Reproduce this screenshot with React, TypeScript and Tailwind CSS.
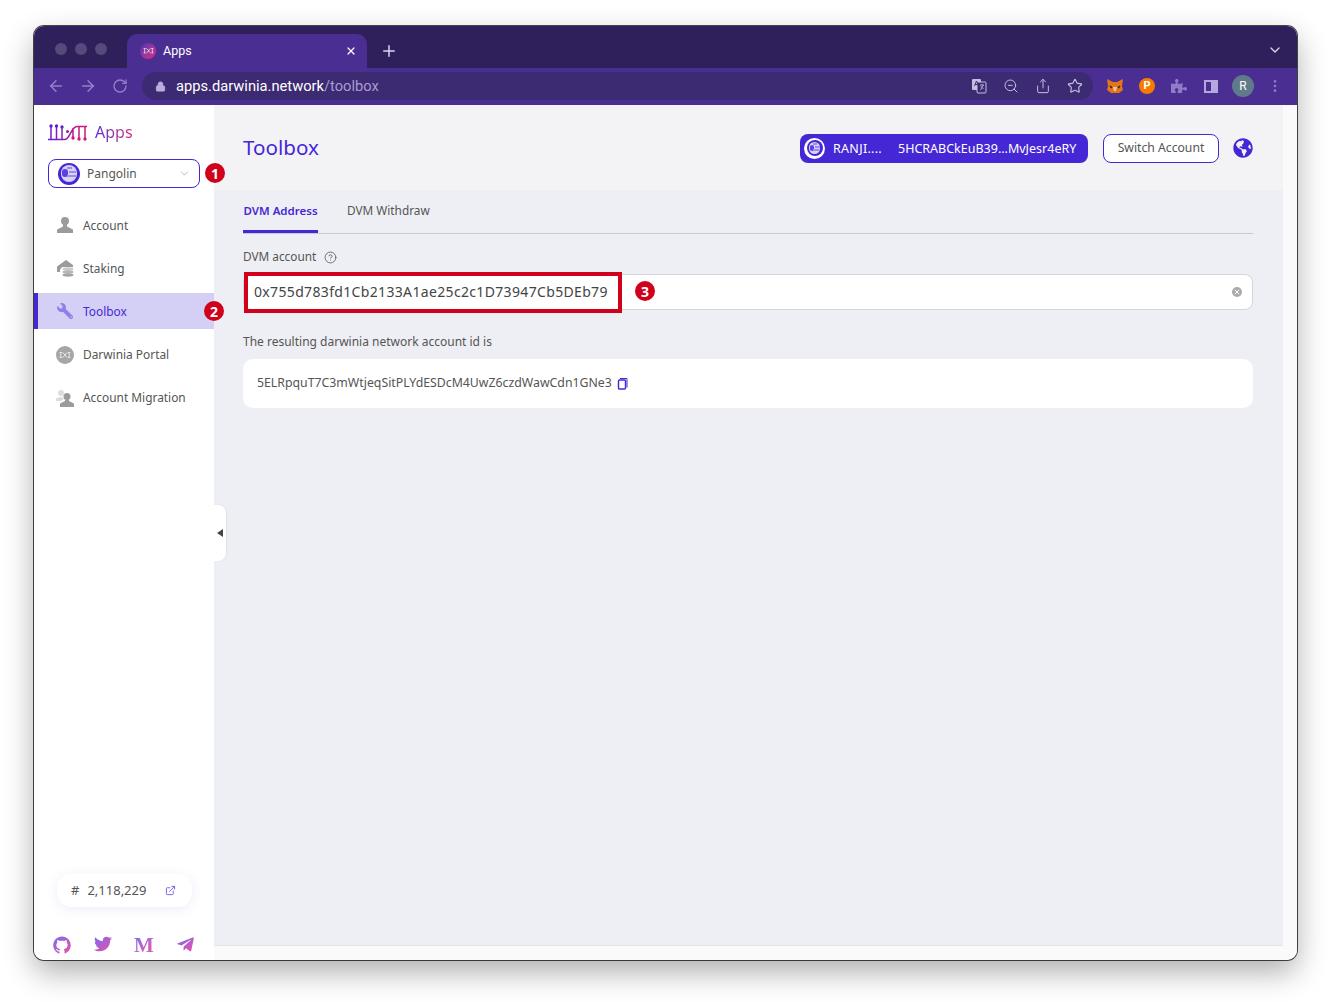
import { ArrowLeft, ArrowRight, ChevronDown, CircleHelp, ExternalLink, Plus, RotateCw, Share, Star, X, Lock, EllipsisVertical, ZoomOut } from "lucide-react"
import { FaPuzzlePiece, FaWrench, FaTwitter, FaTelegramPlane, FaGlobeAmericas } from "react-icons/fa"
import { AiOutlineGithub } from "react-icons/ai"

const sans = "font-['Noto_Sans',sans-serif]"
const chrome = "font-['Roboto',sans-serif]"

const Badge = ({ n, className }: { n: number; className: string }) => (
  <span className={`absolute z-10 flex size-5 items-center justify-center rounded-full bg-[#d0021b] text-[14px] font-bold text-white ${className}`}>
    {n}
  </span>
)

const DnaMark = ({ className }: { className?: string }) => (
  <svg viewBox="0 0 20 10" fill="none" stroke="currentColor" strokeWidth="1.2" className={className}>
    <path d="M1 1h4M1 9h4M3 1v8M15 1h4M15 9h4M17 1v8M6 1c3 0 5 8 8 8M6 9c3 0 5-8 8-8" />
  </svg>
)

const PlanetLogo = ({ className }: { className?: string }) => (
  <span className={`flex items-center justify-center rounded-full bg-[#4527d6] ${className}`}>
    <span className="relative block size-[74%] overflow-hidden rounded-full bg-[#d9d2f8]">
      <span className="absolute left-[10%] top-[22%] h-[50%] w-[32%] rounded-full bg-[#5a40dc]" />
      <span className="absolute right-[4%] top-[36%] h-[12%] w-[44%] bg-[#9c8dea]" />
      <span className="absolute right-[10%] top-[60%] h-[12%] w-[50%] bg-[#9c8dea]" />
      <span className="absolute left-[40%] top-[10%] h-[12%] w-[30%] bg-[#9c8dea]" />
    </span>
  </span>
)

const UserIcon = () => (
  <svg viewBox="0 0 18 18" className="size-[18px]" fill="#9b9b9b">
    <circle cx="9" cy="5" r="4" />
    <path d="M7 8h4v2.5l6 3V17H1v-3.500l6-3z" />
  </svg>
)

const StakingIcon = () => (
  <svg viewBox="0 0 18 18" className="size-[18px]" fill="#9b9b9b">
    <path d="M10 1l7 5v2H8C5 8 4 10 4 13H1V7.500z" />
    <ellipse cx="12" cy="10" rx="5.500" ry="1.700" fill="#c9c9c9" />
    <ellipse cx="12" cy="13" rx="5.500" ry="1.700" fill="#b5b5b5" />
    <ellipse cx="12" cy="16" rx="5.500" ry="1.700" fill="#a5a5a5" />
  </svg>
)

const MigrationIcon = () => (
  <svg viewBox="0 0 20 18" className="h-[18px] w-5" fill="#9b9b9b">
    <circle cx="6" cy="4" r="3" fill="#dcdcdc" />
    <path d="M1 12V9.500L5 8h2l2 2-3 2z" fill="#dcdcdc" />
    <circle cx="12" cy="7.500" r="3.500" />
    <path d="M10 10.500h4v1.500l5 2.500V18H5v-3.500l5-2.500z" />
  </svg>
)

const CopyIcon = () => (
  <svg viewBox="0 0 11 13" fill="none" stroke="#4527d6" className="ml-[5px] h-[13px] w-[11px]">
    <path d="M3 1.500h7v9" strokeWidth="1" />
    <rect x="1.500" y="3" width="7" height="9" rx="1" strokeWidth="1.400" />
  </svg>
)

const navItems = [
  { label: "Account", icon: <UserIcon /> },
  { label: "Staking", icon: <StakingIcon /> },
  { label: "Toolbox", icon: <FaWrench className="size-[16px] -scale-x-100 text-[#8f7fe8]" />, active: true },
  {
    label: "Darwinia Portal",
    icon: (
      <span className="flex size-[18px] items-center justify-center rounded-full bg-[#a6a6a6]">
        <DnaMark className="w-3 text-white" />
      </span>
    ),
  },
  { label: "Account Migration", icon: <MigrationIcon /> },
]

const Gradient = () => (
  <svg className="absolute size-0">
    <defs>
      <linearGradient id="social" x1="0" y1="0" x2="1" y2="1">
        <stop offset="0%" stopColor="#7a6cf0" />
        <stop offset="100%" stopColor="#ec4fa8" />
      </linearGradient>
      <linearGradient id="logo" x1="0" y1="0" x2="1" y2="0">
        <stop offset="0%" stopColor="#6a1fd6" />
        <stop offset="100%" stopColor="#d6186f" />
      </linearGradient>
    </defs>
  </svg>
)

const Sidebar = () => (
  <aside className="relative flex w-[180px] shrink-0 flex-col bg-white">
    <div className="flex items-center gap-[7px] pl-[14px] pt-[17px]">
      <svg viewBox="0 0 40 17" className="h-[17px] w-10" fill="none" stroke="url(#logo)" strokeWidth="1.500">
        <path d="M0 15.500h17c5 0 6-13 12-13h10M3 2v13M8.500 2v13M14 2v13M25 4v10M31 3v11M37 3v11" />
        <circle cx="3" cy="2" r="1.700" fill="#5a22d6" stroke="none" />
        <circle cx="8.500" cy="2" r="1.700" fill="#5a22d6" stroke="none" />
        <circle cx="14" cy="3" r="1.700" fill="#6a20d0" stroke="none" />
        <circle cx="19.500" cy="7.500" r="1.500" fill="#9a1fb0" stroke="none" />
        <circle cx="25" cy="14" r="1.700" fill="#d6186f" stroke="none" />
        <circle cx="31" cy="15" r="1.700" fill="#d6186f" stroke="none" />
        <circle cx="37" cy="15" r="1.700" fill="#d6186f" stroke="none" />
      </svg>
      <span className="bg-gradient-to-r from-[#5a1fd6] to-[#d6186f] bg-clip-text text-[16px] leading-[20px] text-transparent">Apps</span>
    </div>
    <div className="mx-[14px] mt-[17px] flex h-[29px] w-[152px] items-center rounded-[8px] border border-[#4527d6] pl-[9px] pr-[8px]">
      <PlanetLogo className="size-[22px]" />
      <span className="ml-[7px] pt-[1px] text-[12px] text-[#555]">Pangolin</span>
      <ChevronDown className="ml-auto size-[13px] text-[#aaa]" strokeWidth={1.5} />
    </div>
    <nav className="mt-[19px] flex flex-col gap-[7.200px]">
      {navItems.map((item) => (
        <div
          key={item.label}
          className={`flex h-9 items-center border-l-4 pl-[17px] ${item.active ? "border-[#4527d6] bg-[#d4d0f5] text-[#4527d6]" : "border-transparent text-[#555]"}`}
        >
          <span className="flex w-5 justify-center">{item.icon}</span>
          <span className="ml-[8px] pt-[1px] text-[11.900px]">{item.label}</span>
        </div>
      ))}
    </nav>
    <div className="mt-auto">
      <div className="mx-[23px] flex h-[33px] w-[135px] items-center rounded-[14px] bg-white pl-[14px] pr-[16px] text-[13px] text-[#555] shadow-[0_2px_12px_rgba(90,70,220,0.1)]">
        <span>#</span>
        <span className="ml-[8px]">2,118,229</span>
        <ExternalLink className="ml-auto size-[11px] text-[#6d5be6]" />
      </div>
      <div className="mt-[28px] flex h-[25px] items-start justify-between pl-[18px] pr-[19px]">
        <AiOutlineGithub className="size-[20px]" fill="url(#social)" />
        <FaTwitter className="size-[18px]" fill="url(#social)" />
        <span className="bg-gradient-to-br from-[#7a6cf0] to-[#ec4fa8] bg-clip-text font-['Liberation_Serif',serif] text-[21px] font-bold leading-[20px] text-transparent">M</span>
        <FaTelegramPlane className="size-[19px]" fill="url(#social)" />
      </div>
    </div>
    <div className="absolute left-full top-[400px] flex h-14 w-3 items-center justify-center rounded-r-[8px] bg-white shadow-[1px_0_2px_rgba(0,0,0,0.06)]">
      <span className="border-y-[4px] border-r-[6px] border-y-transparent border-r-[#444]" />
    </div>
  </aside>
)

const Main = () => (
  <main className="flex min-w-0 flex-1 flex-col bg-[#fafafa] pb-[14px] pr-[14px]">
    <div className="flex flex-1 flex-col border-b border-[#e4e5ea] bg-[#eeeff4]">
      <header className="flex h-[85px] shrink-0 items-center justify-between bg-[#f3f3f6] pl-[29px] pr-[30px]">
        <h1 className="text-[20.600px] text-[#4527d6]">Toolbox</h1>
        <div className="mt-[1px] flex items-center">
          <div className="flex h-[29px] w-[288px] items-center overflow-hidden rounded-[8px] bg-[#4527d6] pl-[4px] text-[12.500px] text-white">
            <span className="flex size-[21px] items-center justify-center rounded-full bg-white">
              <PlanetLogo className="size-[16px]" />
            </span>
            <span className="ml-[8px] w-[65px] pt-[2px] tracking-[0.3px]">RANJI....</span>
            <span className="whitespace-nowrap pt-[2px]">5HCRABCkEuB39...MvJesr4eRY</span>
          </div>
          <button className="ml-[15px] h-[29px] w-[116px] rounded-[8px] border border-[#4527d6] bg-white text-[12.200px] text-[#555]">Switch Account</button>
          <FaGlobeAmericas className="ml-[14px] size-5 text-[#4527d6]" />
        </div>
      </header>
      <section className="pl-[29px] pr-[30px] text-[11.800px] text-[#555]">
        <div className="flex h-[44px] items-end border-b border-[#c9c9d6]">
          <div className="flex h-[44px] w-[75px] items-center justify-center whitespace-nowrap border-b-[3px] border-[#4527d6] pt-[3px] text-[11.500px] font-semibold text-[#4527d6]">DVM Address</div>
          <div className="ml-[29px] flex h-[44px] items-center pb-[3px] pt-[3px]">DVM Withdraw</div>
        </div>
        <div className="mt-[14px] flex h-[18px] items-center">
          DVM account
          <CircleHelp className="ml-[8px] size-[13px]" strokeWidth={1.500} />
        </div>
        <div className="relative mt-[8px] flex h-9 items-center rounded-[8px] border border-[#d5d5d9] bg-white pl-[10px] pr-[10px]">
          <span className="pb-[1px] text-[14px] tracking-[0.340px] text-[#444]">0x755d783fd1Cb2133A1ae25c2c1D73947Cb5DEb79</span>
          <span className="absolute left-0 top-[-3px] h-[41px] w-[378px] border-[4px] border-[#d0021b]" />
          <Badge n={3} className="left-[391px] top-[6px]" />
          <span className="ml-auto flex size-[10px] items-center justify-center rounded-full bg-[#aaa]">
            <X className="size-2 text-white" strokeWidth={3} />
          </span>
        </div>
        <div className="mt-[23px] text-[12px] leading-[18px]">The resulting darwinia network account id is</div>
        <div className="mt-[8px] flex h-[49px] items-center rounded-[10px] bg-white pl-[14px]">
          <span className="text-[12.300px]">5ELRpquT7C3mWtjeqSitPLYdESDcM4UwZ6czdWawCdn1GNe3</span>
          <CopyIcon />
        </div>
      </section>
    </div>
  </main>
)

const Toolbar = () => (
  <div className={`${chrome} flex h-[37px] items-center bg-[#4b2e91] pb-[1px] pl-[13px] pr-[13px]`}>
    <ArrowLeft className="size-[18px] text-[#9480cc]" />
    <ArrowRight className="ml-[14px] size-[18px] text-[#9480cc]" />
    <RotateCw className="ml-[15px] size-[16px] text-[#9480cc]" />
    <div className="ml-[14px] flex h-7 w-[951px] items-center rounded-full bg-[#3c2a72] pl-[13px] pr-[10px]">
      <Lock className="size-[11px] text-[#b9aedb]" fill="#b9aedb" />
      <span className="ml-[10px] text-[14.700px] text-white">apps.darwinia.network<span className="text-[#a99cd1]">/toolbox</span></span>
      <div className="ml-auto flex items-center gap-[16px] text-[#c6bee0]">
        <svg viewBox="0 0 16 16" className="size-4">
          <rect x="1" y="1" width="9" height="11" rx="1" fill="#c6bee0" />
          <rect x="6" y="4" width="9" height="11" rx="1" fill="#3c2a72" stroke="#c6bee0" />
          <path d="M9 7h4M11 6v1M9.500 12l3-5M9.500 8l3 3" stroke="#c6bee0" strokeWidth="0.800" />
          <path d="M3.500 8l2-5 2 5M4.300 6.500h2.400" stroke="#3c2a72" fill="none" />
        </svg>
        <ZoomOut className="size-4" strokeWidth={1.500} />
        <Share className="size-4" strokeWidth={1.500} />
        <Star className="size-4" strokeWidth={1.700} />
      </div>
    </div>
    <svg viewBox="0 0 18 16" className="ml-[13px] h-4 w-[18px]">
      <path d="M1 1l6 3h4l6-3-1 7 1 4-4 3H5l-4-3 1-4z" fill="#e2761b" />
      <path d="M7 9h4l-1 4H8z" fill="#f6c9a0" />
      <path d="M4 8l2 2M14 8l-2 2" stroke="#3a2010" strokeWidth="1.500" />
    </svg>
    <span className="ml-[15px] flex size-4 items-center justify-center rounded-full bg-[#f57c00] text-[11px] font-bold text-white">P</span>
    <FaPuzzlePiece className="ml-[16px] size-[16px] text-[#8f7cc9]" />
    <span className="ml-[17px] flex h-[13px] w-[14px] justify-end border-2 border-[#b5a8de]">
      <span className="h-full w-[5px] bg-[#b5a8de]" />
    </span>
    <span className="ml-[14px] flex size-[22px] items-center justify-center rounded-full bg-[#5f7b8a] text-[12px] text-white">R</span>
    <EllipsisVertical className="ml-[13px] size-[16px] text-[#8f7cc9]" />
  </div>
)

const TabBar = () => (
  <div className={`${chrome} flex h-[42px] items-end bg-[#2f205c]`}>
    <div className="mb-[13px] ml-[21px] flex gap-[8px]">
      <span className="size-3 rounded-full bg-[#554a7b]" />
      <span className="size-3 rounded-full bg-[#554a7b]" />
      <span className="size-3 rounded-full bg-[#554a7b]" />
    </div>
    <div className="ml-[20px] flex h-[34px] w-[240px] items-center rounded-t-[10px] bg-[#4b2e91] pl-[13px] pr-[10px] text-[12.500px] text-white">
      <span className="flex size-4 items-center justify-center rounded-full bg-gradient-to-br from-[#4a2bb5] to-[#e0117f]">
        <DnaMark className="w-[11px] text-white" />
      </span>
      <span className="ml-[7px]">Apps</span>
      <X className="ml-auto size-[12px]" strokeWidth={2.500} />
    </div>
    <Plus className="mb-[8px] ml-[13px] size-[18px] text-[#d9d3ec]" strokeWidth={2} />
    <ChevronDown className="mb-[10px] ml-auto mr-[14px] size-[16px] text-[#d9d3ec]" />
  </div>
)

export default function App() {
  return (
    <div className={`${sans} min-h-[1002px] bg-white pb-[42px] pl-[34px] pr-[34px] pt-[26px]`}>
      <Gradient />
      <div className="flex h-[934px] flex-col overflow-hidden rounded-[10px] shadow-[0_12px_30px_rgba(0,0,0,0.32),0_0_0_1px_rgba(0,0,0,0.7)]">
        <TabBar />
        <Toolbar />
        <div className="relative flex min-h-0 flex-1">
          <Sidebar />
          <Main />
          <Badge n={1} className="left-[171px] top-[58px]" />
          <Badge n={2} className="left-[170px] top-[196px]" />
        </div>
      </div>
    </div>
  )
}
